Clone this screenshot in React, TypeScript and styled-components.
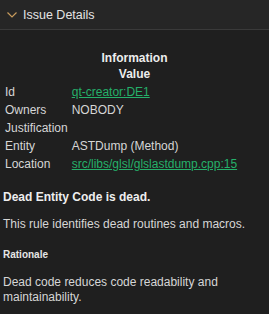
import styled, { createGlobalStyle } from "styled-components";

const GlobalStyle = createGlobalStyle`
  html, body {
    margin: 0;
    padding: 0;
    background: #1f1f1f;
  }
  body {
    font-family: "Liberation Sans", Arial, sans-serif;
    font-size: 12px;
    color: #d6d6d6;
  }
`;

const Panel = styled.div`
  width: 269px;
  height: 314px;
  background: #1f1f1f;
  overflow: hidden;
`;

const Header = styled.div`
  height: 30px;
  box-sizing: border-box;
  display: flex;
  align-items: center;
  gap: 6px;
  padding: 1px 0 0 7px;
  background: #262626;
  border-bottom: 1px solid #3a3a3a;
  font-size: 12.5px;
  color: #e4e4e4;
`;

const Body = styled.div`
  padding: 20px 3px 0 3px;
`;

const InfoTable = styled.table`
  width: 100%;
  border-collapse: collapse;

  th {
    font-weight: bold;
    text-align: center;
    line-height: 16px;
    color: #ededed;
    padding: 0 0 1px 0;
  }

  td {
    padding: 0 2px;
    line-height: 18px;
    vertical-align: top;
    white-space: nowrap;
  }

  td:first-child {
    width: 61px;
  }
`;

const Link = styled.a`
  color: #25b06a;
  text-decoration: underline;
`;

const Title = styled.p`
  margin: 16px 0 0 0;
  line-height: 16px;
  font-weight: bold;
  color: #eeeeee;
`;

const Text = styled.p<{ $top: number }>`
  margin: ${(p) => p.$top}px 0 0 0;
  line-height: 15px;
`;

const SubTitle = styled.p`
  margin: 16px 0 0 0;
  font-size: 10px;
  line-height: 13px;
  font-weight: bold;
  color: #e6e6e6;
`;

function Chevron() {
  return (
    <svg width="10" height="6" viewBox="0 0 10 6">
      <path d="M0.5 0.5 L5 5 L9.5 0.5" fill="none" stroke="#c79b5c" strokeWidth="1.2" />
    </svg>
  );
}

const rows: [string, React.ReactNode][] = [
  ["Id", <Link>qt-creator:DE1</Link>],
  ["Owners", "NOBODY"],
  ["Justification", ""],
  ["Entity", "ASTDump (Method)"],
  ["Location", <Link>src/libs/glsl/glslastdump.cpp:15</Link>],
];

export default function App() {
  return (
    <Panel>
      <GlobalStyle />
      <Header>
        <Chevron />
        <span>Issue Details</span>
      </Header>
      <Body>
        <InfoTable>
          <thead>
            <tr>
              <th colSpan={2}>
                Information
                <br />
                Value
              </th>
            </tr>
          </thead>
          <tbody>
            {rows.map(([k, v]) => (
              <tr key={k}>
                <td>{k}</td>
                <td>{v}</td>
              </tr>
            ))}
          </tbody>
        </InfoTable>
        <Title>Dead Entity Code is dead.</Title>
        <Text $top={12}>This rule identifies dead routines and macros.</Text>
        <SubTitle>Rationale</SubTitle>
        <Text $top={14}>Dead code reduces code readability and maintainability.</Text>
      </Body>
    </Panel>
  );
}
